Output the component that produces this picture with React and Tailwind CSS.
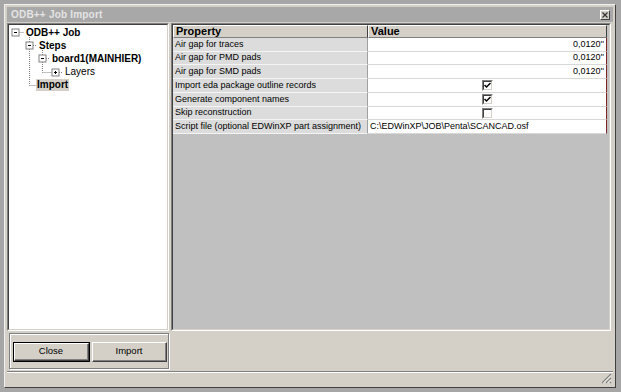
import React from 'react';

const rows = [
  { label: 'Air gap for traces', value: "0,0120''", kind: 'num', h: 'h-[14px]' },
  { label: 'Air gap for PMD pads', value: "0,0120''", kind: 'num', h: 'h-[13px]' },
  { label: 'Air gap for SMD pads', value: "0,0120''", kind: 'num', h: 'h-[14px]' },
  { label: 'Import eda package outline records', value: true, kind: 'check', h: 'h-[14px]' },
  { label: 'Generate component names', value: true, kind: 'check', h: 'h-[14px]' },
  { label: 'Skip reconstruction', value: false, kind: 'check', h: 'h-[13px]' },
  { label: 'Script file (optional EDWinXP part assignment)', value: 'C:\\EDWinXP\\JOB\\Penta\\SCANCAD.osf', kind: 'text', h: 'h-[14px]' },
];

const treeItems = [
  { label: 'ODB++ Job', pl: 'pl-[16px]', bold: true },
  { label: 'Steps', pl: 'pl-[29px]', bold: true },
  { label: 'board1(MAINHIER)', pl: 'pl-[42px]', bold: true },
  { label: 'Layers', pl: 'pl-[55px]', bold: false },
  { label: 'Import', pl: 'pl-[27px]', bold: true, selected: true },
];

const Checkbox = ({ checked }) => (
  <div className="w-[11px] h-[11px] bg-white border-t border-l border-[#808080] border-r border-b border-r-white border-b-white">
    <div className="w-full h-full border-t border-l border-[#404040] border-r border-b border-r-[#d4d0c8] border-b-[#d4d0c8] flex items-center justify-center">
      {checked && (
        <svg width="7" height="7" viewBox="0 0 7 7">
          <path d="M0.5 3 L2.5 5 L6.5 1" stroke="#000" strokeWidth="1.5" fill="none" />
        </svg>
      )}
    </div>
  </div>
);

// tree connector lines and +/- boxes, drawn in panel coordinates
const TreeLines = () => {
  const box = (cx, cy, plus) => (
    <g key={`${cx}-${cy}`}>
      <rect x={cx - 3.5} y={cy - 3.5} width="7" height="7" fill="#fff" stroke="#808080" />
      <line x1={cx - 1.5} y1={cy} x2={cx + 1.5} y2={cy} stroke="#000" />
      {plus && <line x1={cx} y1={cy - 1.5} x2={cx} y2={cy + 1.5} stroke="#000" />}
    </g>
  );
  const dot = { stroke: '#808080', strokeDasharray: '1 1', strokeWidth: 1 };
  return (
    <svg className="absolute left-0 top-0" width="160" height="100">
      <line x1="10.5" y1="7.5" x2="15" y2="7.5" {...dot} />
      <line x1="20.5" y1="12" x2="20.5" y2="60.5" {...dot} />
      <line x1="20.5" y1="60.5" x2="27" y2="60.5" {...dot} />
      <line x1="24" y1="20.5" x2="28" y2="20.5" {...dot} />
      <line x1="33.5" y1="25" x2="33.5" y2="47.5" {...dot} />
      <line x1="37" y1="33.5" x2="41" y2="33.5" {...dot} />
      <line x1="33.5" y1="47.5" x2="43" y2="47.5" {...dot} />
      <line x1="50" y1="47.5" x2="54" y2="47.5" {...dot} />
      {box(6.5, 7.5, false)}
      {box(20.5, 20.5, false)}
      {box(33.5, 33.5, false)}
      {box(46.5, 47.5, true)}
    </svg>
  );
};

const Sunken = ({ className, children }) => (
  <div className={`border-t border-l border-[#808080] border-r border-b border-r-white border-b-white ${className}`}>
    <div className="w-full h-full border-t border-l border-[#404040] border-r border-b border-r-[#d4d0c8] border-b-[#d4d0c8] relative overflow-hidden">
      {children}
    </div>
  </div>
);

const Button = ({ label, isDefault }) => (
  <div className={`h-[20px] ${isDefault ? 'w-[77px] border border-black' : 'w-[75px]'}`}>
    <div className="w-full h-full bg-[#d4d0c8] border-t border-l border-white border-r border-b border-r-[#404040] border-b-[#404040]">
      <div className="w-full h-full border-r border-b border-[#808080] flex items-center justify-center text-[9.5px] text-black">
        {label}
      </div>
    </div>
  </div>
);

export default function App() {
  return (
    <div className="w-[621px] h-[392px] bg-[#a6a6a6] pt-[4px] pl-[4px] font-['Liberation_Sans',Arial,sans-serif] overflow-hidden">
      <div className="w-[612px] h-[384px] bg-[#d4d0c8] border border-t-[#f0f0f0] border-l-[#f0f0f0] border-r-[#404040] border-b-[#404040] flex flex-col">
        {/* title bar */}
        <div className="mx-[2px] mt-[2px] h-[15px] bg-[#a8a8a8] flex items-center justify-between pl-[4px] pr-[3px]">
          <span className="text-[10px] font-bold text-[#e4e4e4] tracking-[0.2px]">ODB++ Job Import</span>
          <div className="w-[10px] h-[10px] bg-[#d4d0c8] border-t border-l border-white border-r border-b border-r-[#404040] border-b-[#404040] flex items-center justify-center">
            <svg width="6" height="6" viewBox="0 0 6 6">
              <path d="M0.5 0.5 L5.5 5.5 M5.5 0.5 L0.5 5.5" stroke="#333" strokeWidth="1.2" />
            </svg>
          </div>
        </div>

        {/* body */}
        <div className="mt-[1px] h-[308px] flex gap-[2px] pl-[2px]">
          <Sunken className="w-[162px] h-full">
            <div className="w-full h-full bg-white pt-[1px] relative">
              <TreeLines />
              {treeItems.map((it) => (
                <div key={it.label} className={`h-[13px] flex items-center ${it.pl} relative`}>
                  <span
                    className={`text-[10px] leading-[12px] px-[1px] text-black ${it.bold ? 'font-bold' : 'text-[9px]'} ${
                      it.selected ? 'bg-[#d4d0c8]' : ''
                    }`}
                  >
                    {it.label}
                  </span>
                </div>
              ))}
            </div>
          </Sunken>

          <Sunken className="w-[440px] h-full">
            <div className="w-full h-full bg-[#c0c0c0]">
              {/* header */}
              <div className="flex h-[13px]">
                <div className="w-[195px] h-full bg-[#d4d0c8] border-t border-l border-white border-r border-b border-r-[#404040] border-b-[#808080] flex items-center pl-[2px]">
                  <span className="text-[11px] font-bold text-black">Property</span>
                </div>
                <div className="w-[239px] h-full bg-[#d4d0c8] border-t border-l border-white border-r border-b border-r-[#404040] border-b-[#808080] flex items-center pl-[2px]">
                  <span className="text-[11px] font-bold text-black">Value</span>
                </div>
              </div>
              {/* rows */}
              {rows.map((r, i) => (
                <div key={r.label} className={`flex ${r.h}`}>
                  <div
                    className={`w-[195px] h-full bg-[#dcdcdc] border-b border-r border-b-[#f4f4f4] border-r-[#a0a0a0] flex items-center pl-[2px] ${
                      i === rows.length - 1 ? 'border-b-[#808080]' : ''
                    }`}
                  >
                    <span className="text-[9px] text-black whitespace-nowrap">{r.label}</span>
                  </div>
                  <div
                    className={`w-[239px] h-full bg-white border-b border-r border-b-[#d8d8d8] border-r-[#7d2424] flex items-center ${
                      r.kind === 'num' ? 'justify-end pr-[2px]' : r.kind === 'check' ? 'justify-center' : 'pl-[2px]'
                    } ${i === rows.length - 1 ? 'border-b-[#808080]' : ''}`}
                  >
                    {r.kind === 'check' ? (
                      <Checkbox checked={r.value} />
                    ) : (
                      <span className="text-[9px] text-black whitespace-nowrap">{r.value}</span>
                    )}
                  </div>
                </div>
              ))}
            </div>
          </Sunken>
        </div>

        {/* buttons */}
        <div className="mt-[2px] h-[36px] pl-[4px] flex">
          <div className="w-[160px] h-full border border-[#808080] shadow-[inset_1px_1px_0_#fff,1px_1px_0_#fff] flex gap-[2px] pl-[3px] pt-[8px]">
            <Button label="Close" isDefault />
            <Button label="Import" />
          </div>
        </div>

        {/* status bar */}
        <div className="mt-[2px] mx-[2px] h-[14px] border-t border-[#808080] shadow-[inset_0_1px_0_#fff] flex justify-end items-end">
          <svg width="11" height="11" viewBox="0 0 11 11" className="mb-[1px] mr-[1px]">
            <path d="M10 1 L1 10 M10 5 L5 10 M10 9 L9 10" stroke="#808080" strokeWidth="1.2" />
            <path d="M10 2.5 L2.5 10 M10 6.5 L6.5 10" stroke="#fff" strokeWidth="0.8" />
          </svg>
        </div>
      </div>
    </div>
  );
}
